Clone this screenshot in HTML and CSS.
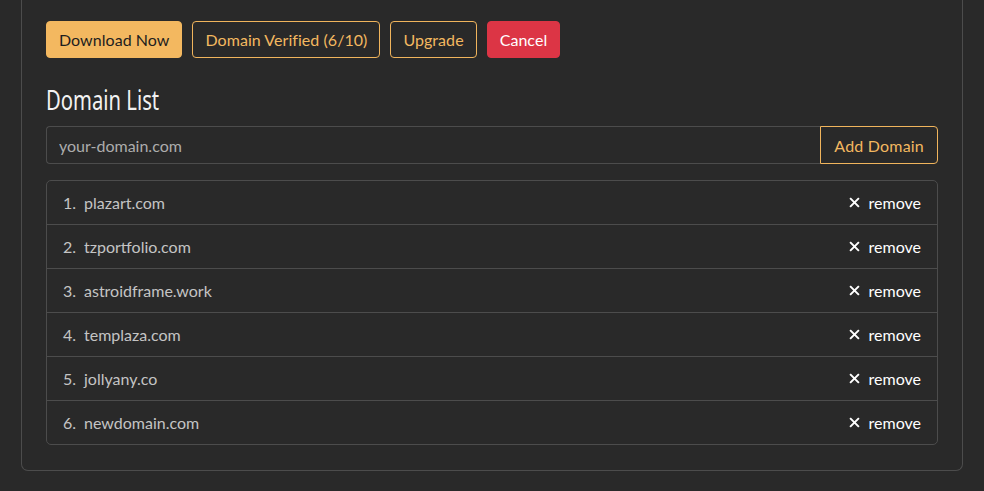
FILE: index.html
```html
<!DOCTYPE html>
<html lang="en">
<head>
<meta charset="utf-8">
<title>Domain List</title>
<link rel="stylesheet" href="styles.css">
</head>
<body>
<div class="page">
  <div class="card">
    <div class="actions">
      <button class="btn btn-primary">Download Now</button>
      <button class="btn btn-outline">Domain Verified (6/10)</button>
      <button class="btn btn-outline">Upgrade</button>
      <button class="btn btn-danger">Cancel</button>
    </div>
    <h2 class="title"><span class="title-text">Domain List</span></h2>
    <div class="input-group">
      <input class="domain-input" type="text" placeholder="your-domain.com">
      <button class="btn btn-outline btn-add">Add Domain</button>
    </div>
    <ol class="domain-list">
      <li class="domain-item"><span class="num">1.</span><span class="name">plazart.com</span><a class="remove"><svg class="x" viewBox="0 0 10 10"><path d="M1 1L9 9M9 1L1 9"/></svg>remove</a></li>
      <li class="domain-item"><span class="num">2.</span><span class="name">tzportfolio.com</span><a class="remove"><svg class="x" viewBox="0 0 10 10"><path d="M1 1L9 9M9 1L1 9"/></svg>remove</a></li>
      <li class="domain-item"><span class="num">3.</span><span class="name">astroidframe.work</span><a class="remove"><svg class="x" viewBox="0 0 10 10"><path d="M1 1L9 9M9 1L1 9"/></svg>remove</a></li>
      <li class="domain-item"><span class="num">4.</span><span class="name">templaza.com</span><a class="remove"><svg class="x" viewBox="0 0 10 10"><path d="M1 1L9 9M9 1L1 9"/></svg>remove</a></li>
      <li class="domain-item"><span class="num">5.</span><span class="name">jollyany.co</span><a class="remove"><svg class="x" viewBox="0 0 10 10"><path d="M1 1L9 9M9 1L1 9"/></svg>remove</a></li>
      <li class="domain-item"><span class="num">6.</span><span class="name">newdomain.com</span><a class="remove"><svg class="x" viewBox="0 0 10 10"><path d="M1 1L9 9M9 1L1 9"/></svg>remove</a></li>
    </ol>
  </div>
</div>
</body>
</html>
```
FILE: styles.css
```css
* { box-sizing: border-box; }
html, body { margin: 0; background: #292929; }
body {
  font-family: "Lato", "Noto Sans", sans-serif;
  font-size: 16px;
  color: #e6e6e6;
}
.page { padding: 0 21px 20px 21px; }
.card {
  border: 1px solid #4c4c4c;
  border-top: none;
  border-radius: 0 0 7px 7px;
  padding: 21px 24px 25px 24px;
}
.actions { display: flex; gap: 10px; }
.btn {
  font-family: inherit;
  font-size: 16px;
  letter-spacing: 0.05px;
  height: 37px;
  padding: 0 12px;
  border-radius: 4px;
  border: 1px solid transparent;
  background: transparent;
  cursor: pointer;
}
.btn-primary { background: #f3b860; border-color: #f3b860; color: #1e1e1e; }
.btn-outline { border-color: #f0b45c; color: #f3b860; }
.btn-danger { background: #dc3545; border-color: #dc3545; color: #fff; }
.title {
  font-family: "Noto Sans", sans-serif;
  font-weight: 400;
  font-size: 27px;
  color: #f2f2f2;
  margin: 26px 0 10px 0;
  line-height: 32px;
}
.title-text {
  display: inline-block;
  transform: scaleX(0.75);
  transform-origin: left center;
}
.input-group { display: flex; height: 38px; }
.domain-input {
  flex: 1;
  font-family: inherit;
  font-size: 16px;
  background: transparent;
  border: 1px solid #4c4c4c;
  border-right: none;
  border-radius: 4px 0 0 4px;
  padding: 0 12px;
  color: #e6e6e6;
  outline: none;
}
.domain-input::placeholder { color: #adadad; }
.btn-add { height: 38px; border-radius: 0 4px 4px 0; padding: 0 13px; letter-spacing: 0.2px; }
.domain-list {
  list-style: none;
  margin: 16px 0 0 0;
  padding: 0;
  border: 1px solid #4c4c4c;
  border-radius: 5px;
}
.domain-item {
  display: flex;
  align-items: center;
  height: 44px;
  padding: 0 16px;
  border-top: 1px solid #4c4c4c;
  color: #c4c4c4;
}
.domain-item:first-child { border-top: none; height: 43px; }
.num { width: 21px; }
.name { flex: 1; }
.remove { color: #fff; display: flex; align-items: center; }
.x { width: 11px; height: 11px; margin-right: 9px; stroke: #fff; stroke-width: 1.8; fill: none; }
```
